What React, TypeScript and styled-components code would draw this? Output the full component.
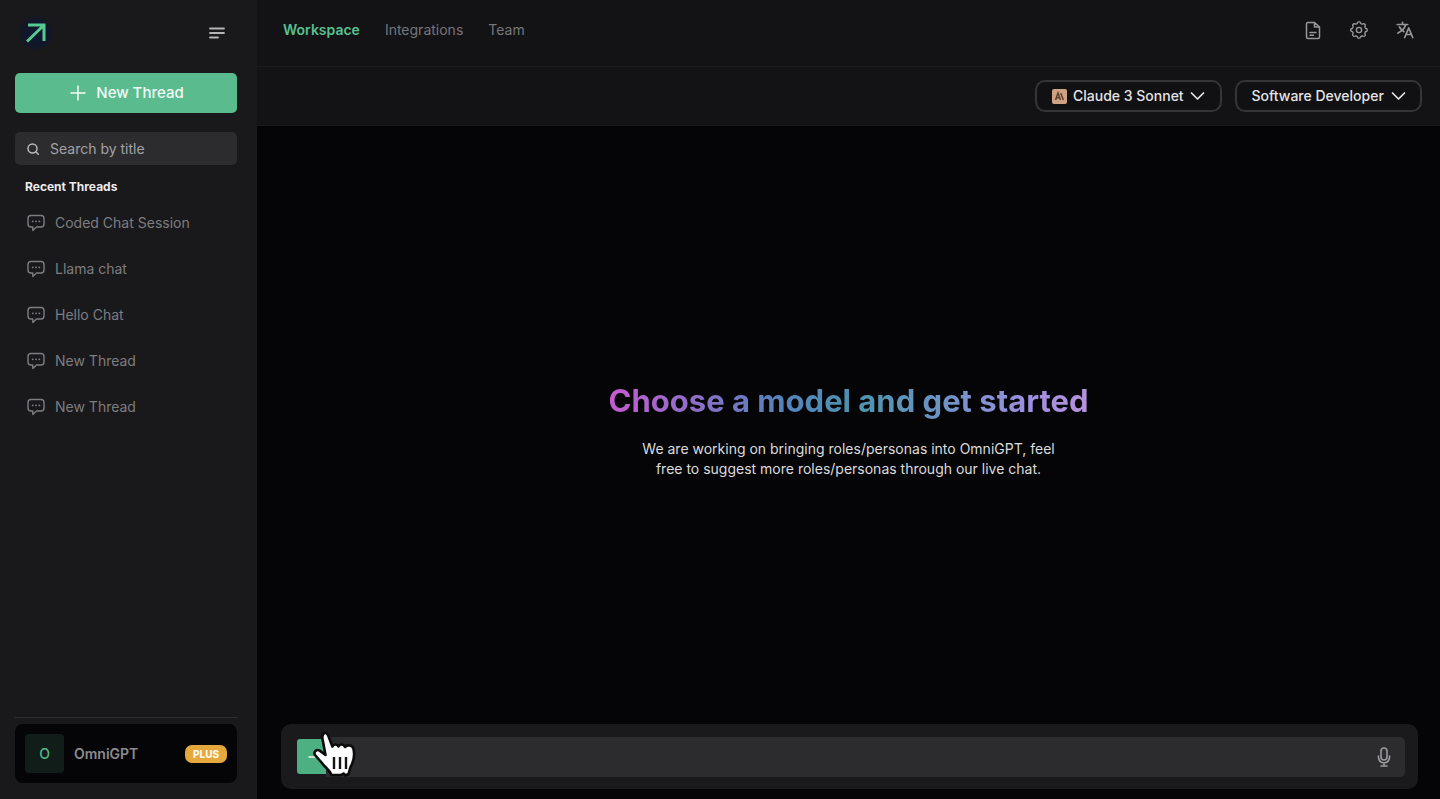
import React from "react";
import styled, { createGlobalStyle } from "styled-components";

const GlobalStyle = createGlobalStyle`
  * { box-sizing: border-box; }
  body { margin: 0; background: #050507; font-family: Inter, "Liberation Sans", sans-serif; font-size: 14px; line-height: 20px; }
  button, input, select { font: inherit; color: inherit; }
  button { border: 0; padding: 0; background: none; cursor: pointer; }
  svg { display: block; flex: none; }
  h1, h2, p, ul { margin: 0; padding: 0; }
`;

const Shell = styled.div`
  display: flex;
  min-height: 100vh;
`;

const Sidebar = styled.aside`
  display: flex;
  flex-direction: column;
  flex: none;
  width: 257px;
  padding: 16px 20px 16px 15px;
  background: #19191b;
`;

const Brand = styled.div`
  display: flex;
  align-items: center;
  justify-content: space-between;
  height: 34px;
  padding: 0 12px 0 3px;
`;

const Logo = styled.a`
  display: grid;
  place-items: center;
  width: 36px;
  height: 36px;
  border-radius: 50%;
  background: radial-gradient(circle, #101830 0%, #11162a 50%, #19191b 72%);
`;

const NewThread = styled.button`
  display: flex;
  align-items: center;
  justify-content: center;
  gap: 10px;
  height: 40px;
  margin-top: 23px;
  padding-left: 2px;
  border-radius: 5px;
  background: #5abc8e;
  color: #f2fbf6;
  font-size: 15px;
  font-weight: 500;
`;

const Search = styled.label`
  display: flex;
  align-items: center;
  gap: 10px;
  height: 33px;
  margin-top: 19px;
  padding: 0 11px;
  border-radius: 5px;
  background: #2c2c2e;
  color: #b8b8ba;
`;

const SearchInput = styled.input`
  flex: 1;
  min-width: 0;
  padding: 0;
  border: 0;
  outline: 0;
  background: none;
  &::placeholder { color: #a2a2a6; opacity: 1; }
`;

const ListTitle = styled.h2`
  margin: 12px 10px 0;
  color: #ececee;
  font-size: 12px;
  font-weight: 700;
`;

const Threads = styled.ul`
  margin-top: 3px;
  list-style: none;
`;

const Thread = styled.a`
  display: flex;
  align-items: center;
  gap: 9px;
  height: 46px;
  padding: 0 11px;
  color: #7d7d81;
  text-decoration: none;
`;

const Account = styled.div`
  margin-top: auto;
  padding-top: 6px;
  border-top: 1px solid #2e2e30;
`;

const AccountButton = styled.button`
  display: flex;
  align-items: center;
  width: 100%;
  height: 59px;
  padding: 0 10px;
  border-radius: 8px;
  background: #050507;
  color: #8b8b8f;
  font-weight: 600;
`;

const Avatar = styled.span`
  display: grid;
  place-items: center;
  width: 39px;
  height: 39px;
  margin-right: 10px;
  border-radius: 4px;
  background: #101d19;
  color: #55b588;
  font-weight: 500;
`;

const Plan = styled.span`
  margin-left: auto;
  padding: 0 8px;
  border-radius: 7px;
  background: #e5a83c;
  color: #fff8e8;
  font-size: 10px;
  font-weight: 800;
  line-height: 18px;
`;

const Main = styled.main`
  display: flex;
  flex: 1;
  flex-direction: column;
  min-width: 0;
`;

const TopBar = styled.header`
  display: flex;
  align-items: flex-start;
  justify-content: space-between;
  height: 67px;
  padding: 20px 26px 0;
  border-bottom: 1px solid #1b1b1d;
  background: #131315;
`;

const Tabs = styled.nav`
  display: flex;
  gap: 25px;
`;

const Tab = styled.a<{ $active?: boolean }>`
  color: ${(p) => (p.$active ? "#58c08f" : "#76767a")};
  font-weight: ${(p) => (p.$active ? 600 : 400)};
  text-decoration: none;
`;

const Tools = styled.div`
  display: flex;
  gap: 27px;
  color: #98989b;
`;

const ToolButton = styled.button`
  display: grid;
  place-items: center;
  width: 19px;
  height: 20px;
`;

const ModelBar = styled.div`
  display: flex;
  align-items: center;
  justify-content: flex-end;
  gap: 13px;
  height: 59px;
  padding: 0 18px;
  border-bottom: 1px solid #19191b;
  background: #131315;
`;

const Picker = styled.label`
  display: flex;
  align-items: center;
  justify-content: center;
  gap: 6px;
  width: 187px;
  height: 32px;
  border: 2px solid #353538;
  border-radius: 10px;
  background: #111113;
  color: #e4e4e6;
`;

const PickerSelect = styled.select`
  appearance: none;
  padding: 0;
  border: 0;
  outline: 0;
  background: none;
  font-weight: 500;
`;

const Stage = styled.section`
  display: flex;
  flex: 1;
  flex-direction: column;
  align-items: center;
  justify-content: center;
  gap: 18px;
  padding-top: 10px;
  text-align: center;
`;

const Headline = styled.h1`
  background: linear-gradient(90deg, #c55bd0 0%, #5583bd 36%, #4c94ad 52%, #6f93c6 70%, #9e8fe0 88%, #b791dc 100%);
  background-clip: text;
  color: transparent;
  font-size: 31px;
  font-weight: 700;
  line-height: 40px;
`;

const Intro = styled.p`
  max-width: 420px;
  color: #dcdcde;
`;

const Composer = styled.form`
  display: flex;
  align-items: center;
  height: 65px;
  margin: 0 22px 10px 24px;
  padding: 0 13px 0 16px;
  border-radius: 10px;
  background: #1a1a1c;
`;

const AddButton = styled.button`
  position: relative;
  display: grid;
  place-items: center;
  width: 29px;
  height: 35px;
  border-radius: 3px 0 0 3px;
  background: #4db082;
  color: #e9f6ef;
`;

const Pointer = styled.svg`
  position: absolute;
  top: -8px;
  left: 15px;
`;

const Prompt = styled.div`
  display: flex;
  flex: 1;
  align-items: center;
  height: 40px;
  padding: 0 12px;
  border-radius: 0 5px 5px 0;
  background: #2c2c2e;
  color: #9b9b9e;
`;

const PromptInput = styled.input`
  flex: 1;
  min-width: 0;
  padding: 0 32px;
  border: 0;
  outline: 0;
  background: none;
`;

const threads = ["Coded Chat Session", "Llama chat", "Hello Chat", "New Thread", "New Thread"];

const stroke = { fill: "none", stroke: "currentColor", strokeLinecap: "round", strokeLinejoin: "round" } as const;

// Eight rounded teeth around a circle of radius 7.4, centred on (9, 9).
const gearPath =
  "M" +
  Array.from({ length: 96 }, (_, i) => {
    const angle = (i / 96) * Math.PI * 2;
    const radius = 7.4 + 0.8 * Math.tanh(2 * Math.cos(8 * angle));
    return `${(9 + radius * Math.cos(angle)).toFixed(2)} ${(9 + radius * Math.sin(angle)).toFixed(2)}`;
  }).join("L") +
  "Z";

const ChatIcon = () => (
  <svg width="20" height="18" viewBox="0 0 20 18" {...stroke} strokeWidth="1.4">
    <path d="M5 1.5h10Q18 1.5 18 4.5v5.500Q18 13 15 13H10.500L6.800 16.400V13H5Q2 13 2 10V4.500Q2 1.500 5 1.500Z" />
    <path d="M6.700 7.300h.1M10 7.300h.1M13.300 7.300h.1" strokeWidth="1.8" />
  </svg>
);

const ChevronIcon = () => (
  <svg width="15" height="10" viewBox="0 0 15 10" {...stroke} strokeWidth="1.7">
    <path d="M1.500 2l6 6 6-6" />
  </svg>
);

const ModelIcon = () => (
  <svg width="15" height="15" viewBox="0 0 15 15">
    <rect width="15" height="15" rx="2" fill="#cfa284" />
    <path d="M3.500 11L6 4l2.500 7M4.400 8.700h3.200M8.700 4l2.700 7" fill="none" stroke="#5a4132" strokeWidth="1.5" />
  </svg>
);

const PointerHand = () => (
  <Pointer width="46" height="50" viewBox="0 0 46 50" aria-hidden="true">
    <path
      d="M11 3.500C12.500 .8 15.300 1.800 16.200 4.500L20.400 15.500C22 12.600 25.300 13 26.400 15.500C28 12.700 31.700 13 33 16C35.500 13.300 40.500 14 41.500 18C43 25 41.500 31 38.500 36L36.500 43L33.500 44.500L31.500 42.500L29 44H19.500C17.500 38.500 13 36.500 9.500 31.500L3 24C1.200 21 4.500 17.800 7.700 19.600L13.500 24L10.500 8Q10 5.200 11 3.500Z"
      fill="#fff"
      stroke="#0b0b0c"
      strokeWidth="2.6"
      strokeLinejoin="round"
    />
    <path d="M22 26v12M28 26v12M34 26v12" stroke="#151517" strokeWidth="2.4" />
    <path d="M25 26v12M31 26v12" stroke="#fff" strokeWidth="2" />
  </Pointer>
);

export default function App() {
  return (
    <>
      <GlobalStyle />
      <Shell>
        <Sidebar>
          <Brand>
            <Logo href="#" aria-label="Home">
              <svg width="20" height="20" viewBox="0 0 20 20" fill="none" stroke="#56ca91" strokeWidth="3">
                <path d="M1 18.500L18 2M2 2h16v16" />
              </svg>
            </Logo>
            <button aria-label="Toggle sidebar">
              <svg width="16" height="12" viewBox="0 0 16 12" stroke="#b4b4b6" strokeWidth="1.8" strokeLinecap="round">
                <path d="M1 1.500h14M1 6h14M1 10.500h8" />
              </svg>
            </button>
          </Brand>
          <NewThread>
            <svg width="16" height="16" viewBox="0 0 16 16" {...stroke} strokeWidth="1.5">
              <path d="M8 1v14M1 8h14" />
            </svg>
            New Thread
          </NewThread>
          <Search>
            <svg width="14" height="14" viewBox="0 0 14 14" {...stroke} strokeWidth="1.5">
              <circle cx="6.5" cy="6.5" r="4.5" />
              <path d="M10 10l2.300 2.300" />
            </svg>
            <SearchInput type="search" placeholder="Search by title" aria-label="Search by title" />
          </Search>
          <ListTitle>Recent Threads</ListTitle>
          <Threads>
            {threads.map((title, i) => (
              <li key={i}>
                <Thread href="#"><ChatIcon />{title}</Thread>
              </li>
            ))}
          </Threads>
          <Account>
            <AccountButton>
              <Avatar>O</Avatar>
              OmniGPT
              <Plan>PLUS</Plan>
            </AccountButton>
          </Account>
        </Sidebar>
        <Main>
          <TopBar>
            <Tabs>
              <Tab href="#" $active>Workspace</Tab>
              <Tab href="#">Integrations</Tab>
              <Tab href="#">Team</Tab>
            </Tabs>
            <Tools>
              <ToolButton aria-label="Documents">
                <svg width="16" height="19" viewBox="0 0 16 19" {...stroke} strokeWidth="1.5">
                  <path d="M3 1.500h6.500L14.500 6v10q0 1.500-1.500 1.500H3q-1.500 0-1.500-1.500V3Q1.500 1.500 3 1.500ZM9.500 1.500V6h5M5 11.500h6M5 14.300h3.500" />
                </svg>
              </ToolButton>
              <ToolButton aria-label="Settings">
                <svg width="18" height="18" viewBox="0 0 18 18" {...stroke} strokeWidth="1.4">
                  <path d={gearPath} />
                  <circle cx="9" cy="9" r="2.6" />
                </svg>
              </ToolButton>
              <ToolButton aria-label="Language">
                <svg width="18" height="18" viewBox="0 0 18 18" {...stroke} strokeWidth="1.7">
                  <path d="M1.300 3.500h10.400M6.500 1.300v2.200M9.700 3.700Q8 9 2 12M3.500 6Q5 9 8 10.700M8.700 16.500L12.700 7l4 9.500M10 13.500h5.500" />
                </svg>
              </ToolButton>
            </Tools>
          </TopBar>
          <ModelBar>
            <Picker>
              <ModelIcon />
              <PickerSelect aria-label="Model"><option>Claude 3 Sonnet</option></PickerSelect>
              <ChevronIcon />
            </Picker>
            <Picker>
              <PickerSelect aria-label="Role"><option>Software Developer</option></PickerSelect>
              <ChevronIcon />
            </Picker>
          </ModelBar>
          <Stage>
            <Headline>Choose a model and get started</Headline>
            <Intro>
              We are working on bringing roles/personas into OmniGPT, feel free to suggest more roles/personas through our live chat.
            </Intro>
          </Stage>
          <Composer onSubmit={(e) => e.preventDefault()}>
            <AddButton type="button" aria-label="Add">
              <svg width="8" height="8" viewBox="0 0 8 8" {...stroke} strokeWidth="1.5">
                <path d="M1 4h6" />
              </svg>
              <PointerHand />
            </AddButton>
            <Prompt>
              <PromptInput type="text" aria-label="Message" />
              <button type="button" aria-label="Voice input">
                <svg width="18" height="22" viewBox="0 0 18 22" {...stroke} strokeWidth="1.6">
                  <rect x="6" y="2" width="6" height="12" rx="3" />
                  <path d="M3.500 10v1.500a5.500 5.500 0 0 0 11 0V10M9 17v3M6 20h6" />
                </svg>
              </button>
            </Prompt>
          </Composer>
        </Main>
      </Shell>
    </>
  );
}
